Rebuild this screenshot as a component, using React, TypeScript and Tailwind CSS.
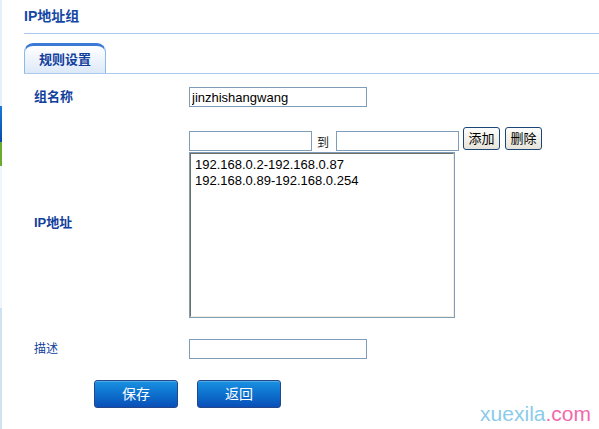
import { useState } from 'react'

const font = "font-['Liberation_Sans','Noto_Sans_CJK_SC',sans-serif]"
const ranges = ['192.168.0.2-192.168.0.87', '192.168.0.89-192.168.0.254']

function XpButton({ label }: { label: string }) {
  return (
    <button className="w-[37px] h-[23px] rounded-[3px] border border-[#1c4677] bg-gradient-to-b from-[#fdfdfb] to-[#e6e4da] text-[13px] leading-none text-black">
      {label}
    </button>
  )
}

function BlueButton({ label }: { label: string }) {
  return (
    <button className="w-[84px] h-[28px] rounded-[3px] border border-[#24478a] bg-gradient-to-b from-[#1a92e2] to-[#0b4fb8] text-[14px] text-white shadow-[inset_0_1px_0_rgba(255,255,255,0.25)]">
      {label}
    </button>
  )
}

export default function App() {
  const [name, setName] = useState('jinzhishangwang')

  return (
    <div className={`w-[599px] h-[429px] bg-white flex relative overflow-hidden ${font}`}>
      {/* left frame edge */}
      <div className="w-[2px] flex flex-col shrink-0">
        <div className="h-[106px] bg-[#e6f0fa]" />
        <div className="h-[36px] bg-gradient-to-b from-[#1a7ad8] to-[#0a4aa8]" />
        <div className="h-[24px] bg-[#6aaa2c]" />
        <div className="h-[142px] bg-[#eef5fc]" />
        <div className="flex-1 bg-[#cfe2f4]" />
      </div>

      <div className="flex-1 pl-[22px]">
        <div className="h-[34px] border-b border-[#a9c9ee] pt-[7px] text-[14px] font-bold leading-[18px] text-[#1447a6]">
          IP地址组
        </div>

        <div className="mt-[9px] border-b border-[#a9c9ee] flex">
          <div className="w-[82px] h-[30px] rounded-t-[9px] border border-b-0 border-[#8fb8ea] border-t-[3px] border-t-[#3b7bd6] bg-gradient-to-b from-white to-[#dde9f8] flex items-center justify-center text-[13px] font-bold text-[#123f9c]">
            规则设置
          </div>
        </div>

        <div className="pl-[10px]">
          {/* 组名称 */}
          <div className="mt-[13px] flex items-center">
            <div className="w-[155px] text-[13px] font-bold text-[#123f9c]">组名称</div>
            <input
              value={name}
              onChange={(e) => setName(e.target.value)}
              className="w-[178px] h-[20px] border border-[#7f9db9] px-[2px] text-[13px] text-black outline-none"
            />
          </div>

          {/* IP地址 */}
          <div className="mt-[20px] flex">
            <div className="w-[155px] self-center text-[13px] font-bold text-[#123f9c]">IP地址</div>
            <div className="flex flex-col">
              <div className="h-[24px] flex items-end">
                <input className="w-[123px] h-[20px] border border-[#7f9db9] outline-none" />
                <span className="ml-[5px] mr-[7px] text-[12px] leading-[16px] text-[#222]">到</span>
                <input className="w-[123px] h-[20px] border border-[#7f9db9] outline-none" />
                <div className="ml-[4px] flex gap-[5px] self-start">
                  <XpButton label="添加" />
                  <XpButton label="删除" />
                </div>
              </div>
              <div className="mt-[1px] w-[266px] h-[166px] border border-[#7f9db9]">
                <div className="h-full border border-t-[#716f64] border-l-[#716f64] border-b-[#f1efe2] border-r-[#f1efe2] pl-[4px] pt-[3px] text-[13px] leading-[16px] text-black">
                  {ranges.map((r) => (
                    <div key={r}>{r}</div>
                  ))}
                </div>
              </div>
            </div>
          </div>

          {/* 描述 */}
          <div className="mt-[21px] flex items-center">
            <div className="w-[155px] text-[12px] text-[#123f9c]">描述</div>
            <input className="w-[178px] h-[20px] border border-[#7f9db9] outline-none" />
          </div>
        </div>

        <div className="mt-[21px] ml-[70px] flex gap-[19px]">
          <BlueButton label="保存" />
          <BlueButton label="返回" />
        </div>
      </div>

      <div className="absolute right-[8px] bottom-[3px] text-[21px] leading-[24px]">
        <span className="text-[#8ccbea]">xuexila</span>
        <span className="text-[#f26aa8]">.com</span>
      </div>
    </div>
  )
}
